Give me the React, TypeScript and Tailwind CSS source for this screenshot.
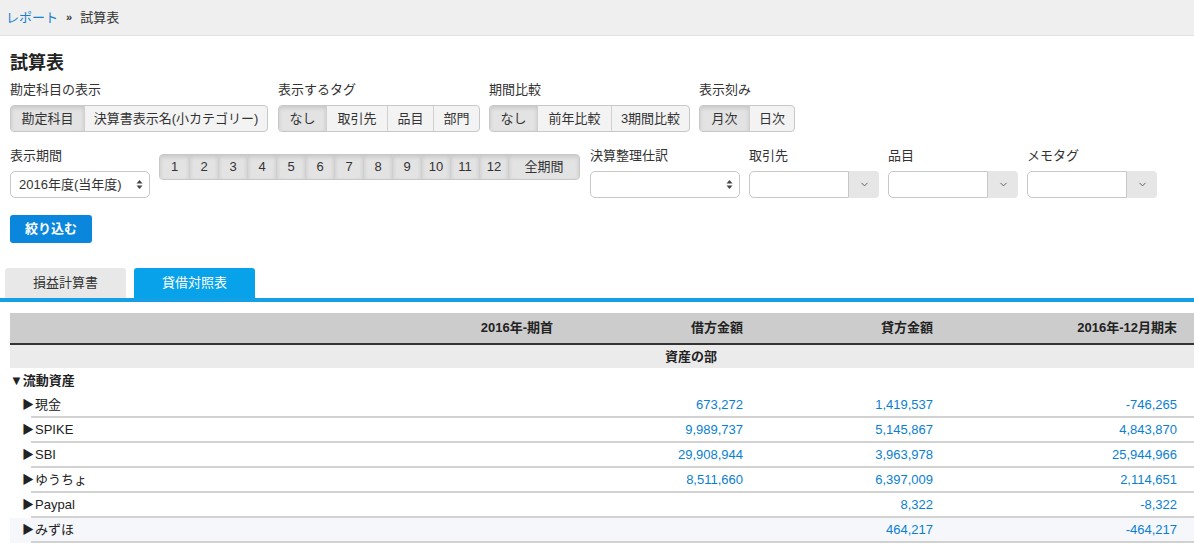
import { ChevronDown } from "lucide-react"

type Seg = { label: string; w: number; active?: boolean }

const font = "font-['Liberation_Sans','Noto_Sans_CJK_JP',sans-serif]"

function SegGroup({ items, h = 27 }: { items: Seg[]; h?: number }) {
  return (
    <div
      className="flex rounded-[4px] border border-[#c8c8c8] overflow-hidden bg-[#f3f3f3]"
      style={{ height: h }}
    >
      {items.map((it, i) => (
        <div
          key={i}
          style={{ width: it.w }}
          className={`flex items-center justify-center text-[13px] text-[#333] ${
            i > 0 ? "border-l border-[#d0d0d0]" : ""
          } ${it.active ? "bg-[#e3e3e3] shadow-[inset_0_2px_4px_rgba(0,0,0,0.13)]" : ""}`}
        >
          {it.label}
        </div>
      ))}
    </div>
  )
}

function UpDown() {
  return (
    <svg width="7" height="11" viewBox="0 0 7 11" className="shrink-0">
      <path d="M3.5 1 L6.5 4.5 L0.5 4.5 Z" fill="#444" />
      <path d="M3.5 10 L6.5 6.5 L0.5 6.5 Z" fill="#444" />
    </svg>
  )
}

function Field({ label, children }: { label: string; children: React.ReactNode }) {
  return (
    <div className="flex flex-col">
      <div className="h-[18px] leading-[18px] text-[13px] text-[#333]">{label}</div>
      <div className="mt-[6px]">{children}</div>
    </div>
  )
}

function ComboInput() {
  return (
    <div className="flex h-[27px]">
      <div className="w-[100px] h-full bg-white border border-[#c8c8c8] rounded-l-[5px]" />
      <div className="w-[30px] h-full bg-[#e6e6e6] rounded-r-[4px] flex items-center justify-center">
        <ChevronDown size={11} strokeWidth={2} className="text-[#555]" />
      </div>
    </div>
  )
}

const rows = [
  { name: "現金", a: "", b: "673,272", c: "1,419,537", d: "-746,265" },
  { name: "SPIKE", a: "", b: "9,989,737", c: "5,145,867", d: "4,843,870" },
  { name: "SBI", a: "", b: "29,908,944", c: "3,963,978", d: "25,944,966" },
  { name: "ゆうちょ", a: "", b: "8,511,660", c: "6,397,009", d: "2,114,651" },
  { name: "Paypal", a: "", b: "", c: "8,322", d: "-8,322" },
  { name: "みずほ", a: "", b: "", c: "464,217", d: "-464,217", hover: true },
]

const months = ["1", "2", "3", "4", "5", "6", "7", "8", "9", "10", "11", "12"]

export default function App() {
  return (
    <div className={`w-[1194px] h-[544px] overflow-hidden bg-white text-[#333] ${font}`}>
      {/* Breadcrumb */}
      <div className="h-[36px] bg-[#efefef] border-b border-[#e2e2e2] px-[6px] flex items-center gap-[8px] text-[13px]">
        <span className="text-[#1a7fd0]">レポート</span>
        <span className="text-[#333] text-[11px] font-bold">»</span>
        <span className="text-[#333]">試算表</span>
      </div>

      <div className="px-[10px]">
        <h1 className="mt-[15px] h-[24px] leading-[24px] text-[18px] font-bold text-[#222]">試算表</h1>

        {/* Row 1 */}
        <div className="mt-[6px] flex gap-[10px]">
          <Field label="勘定科目の表示">
            <SegGroup
              items={[
                { label: "勘定科目", w: 73, active: true },
                { label: "決算書表示名(小カテゴリー)", w: 183 },
              ]}
            />
          </Field>
          <Field label="表示するタグ">
            <SegGroup
              items={[
                { label: "なし", w: 47, active: true },
                { label: "取引先", w: 61 },
                { label: "品目", w: 46 },
                { label: "部門", w: 46 },
              ]}
            />
          </Field>
          <div className="-ml-px">
            <Field label="期間比較">
              <SegGroup
                items={[
                  { label: "なし", w: 47, active: true },
                  { label: "前年比較", w: 74 },
                  { label: "3期間比較", w: 78 },
                ]}
              />
            </Field>
          </div>
          <div className="-ml-px">
            <Field label="表示刻み">
              <SegGroup
                items={[
                  { label: "月次", w: 49, active: true },
                  { label: "日次", w: 45 },
                ]}
              />
            </Field>
          </div>
        </div>

        {/* Row 2 */}
        <div className="mt-[15px] flex gap-[9px]">
          <Field label="表示期間">
            <div className="w-[140px] h-[27px] bg-white border border-[#c8c8c8] rounded-[5px] flex items-center justify-between pl-[8px] pr-[6px] text-[13px]">
              <span>2016年度(当年度)</span>
              <UpDown />
            </div>
          </Field>
          <div className="mt-[7px]">
            <SegGroup
              h={26}
              items={[
                ...months.map((m) => ({ label: m, w: 29, active: true })),
                { label: "全期間", w: 71, active: true },
              ]}
            />
          </div>
          <div className="ml-px">
            <Field label="決算整理仕訳">
              <div className="w-[150px] h-[27px] bg-white border border-[#c8c8c8] rounded-[5px] flex items-center justify-end pr-[6px]">
                <UpDown />
              </div>
            </Field>
          </div>
          <Field label="取引先">
            <ComboInput />
          </Field>
          <Field label="品目">
            <ComboInput />
          </Field>
          <Field label="メモタグ">
            <ComboInput />
          </Field>
        </div>

        <button className="mt-[17px] w-[82px] h-[28px] rounded-[3px] bg-[#0a87dc] text-white text-[13px] font-bold">
          絞り込む
        </button>
      </div>

      {/* Tabs */}
      <div className="mt-[25px] px-[5px] flex gap-[8px] border-b-4 border-[#159fe4]">
        <div className="w-[121px] h-[30px] bg-[#e8e8e8] rounded-t-[3px] flex items-center justify-center text-[13px] text-[#333]">
          損益計算書
        </div>
        <div className="w-[121px] h-[30px] bg-[#08a2ea] rounded-t-[3px] flex items-center justify-center text-[13px] text-white">
          貸借対照表
        </div>
      </div>

      {/* Table */}
      <div className="mt-[11px] ml-[10px] text-[13px]">
        <div className="h-[32px] bg-[#cccccc] border-b-2 border-[#333] grid grid-cols-[353px_190px_190px_190px_1fr] items-center font-bold text-[#222]">
          <div />
          <div className="text-right">2016年-期首</div>
          <div className="text-right">借方金額</div>
          <div className="text-right">貸方金額</div>
          <div className="text-right pr-[17px]">2016年-12月期末</div>
        </div>
        <div className="h-[23px] bg-[#ebebeb] grid grid-cols-[353px_190px_190px_190px_1fr] items-center font-bold text-[#222]">
          <div />
          <div />
          <div className="text-right pr-[26px]">資産の部</div>
          <div />
          <div />
        </div>
        <div className="h-[25px] flex items-center font-bold text-[#222]">▼流動資産</div>
        {rows.map((r) => (
          <div key={r.name} className={r.hover ? "bg-[#f5f7fb]" : ""}>
            <div className="ml-[21px] h-[25px] border-b-2 border-[#d2d2d2] grid grid-cols-[332px_190px_190px_190px_1fr] items-center">
              <div className="-ml-[9px] text-[#222] flex items-center">
                <span className="text-[12px] mr-px">▶</span>
                {r.name}
              </div>
              <div className="text-right text-[#0a7fd1]">{r.a}</div>
              <div className="text-right text-[#0a7fd1]">{r.b}</div>
              <div className="text-right text-[#0a7fd1]">{r.c}</div>
              <div className="text-right pr-[17px] text-[#0a7fd1]">{r.d}</div>
            </div>
          </div>
        ))}
      </div>
    </div>
  )
}
